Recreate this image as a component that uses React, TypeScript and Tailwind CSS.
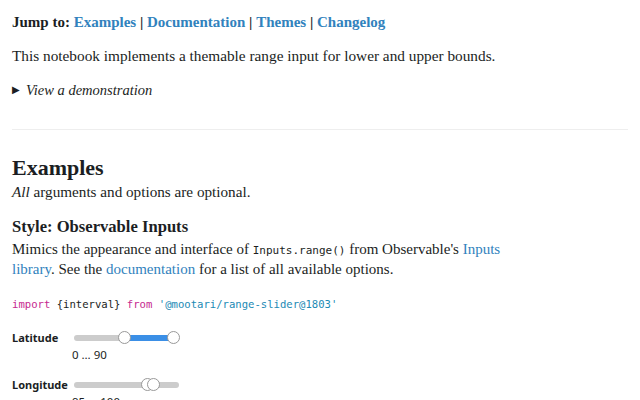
import React from "react";

const serif = { fontFamily: '"Liberation Serif", serif' };
const mono = { fontFamily: '"DejaVu Sans Mono", monospace' };

function Slider({ a, b }: { a: number; b: number }) {
  const w = 105;
  const pa = a * (w - 12) + 6;
  const pb = b * (w - 12) + 6;
  return (
    <div className="relative h-[14px] w-[105px]">
      <div className="absolute left-0 right-0 top-[4px] h-[6px] rounded-full bg-[#cccccc]" />
      <div className="absolute top-[4px] h-[6px] bg-[#3b8fe6]" style={{ left: pa, width: pb - pa }} />
      <div className="absolute top-0 h-[13px] w-[13px] rounded-full border border-[#999] bg-white" style={{ left: pa - 6.5 }} />
      <div className="absolute top-0 h-[13px] w-[13px] rounded-full border border-[#999] bg-white" style={{ left: pb - 6.5 }} />
    </div>
  );
}

export default function App() {
  return (
    <div className="w-[640px] h-[400px] overflow-hidden bg-white px-3 text-[#1b1e23]" style={serif}>
      <p className="pt-[12px] text-[15px] leading-[20px]">
        <b>Jump to:</b>{" "}
        <b className="text-[#3182bd]">Examples</b> <b>|</b> <b className="text-[#3182bd]">Documentation</b> <b>|</b>{" "}
        <b className="text-[#3182bd]">Themes</b> <b>|</b> <b className="text-[#3182bd]">Changelog</b>
      </p>
      <p className="mt-[14px] text-[15.3px] leading-[20px]">
        This notebook implements a themable range input for lower and upper bounds.
      </p>
      <div className="mt-[14px] flex items-center text-[14.5px] leading-[20px]">
        <span className="mr-[6px] text-[10px]">▶</span>
        <i>View a demonstration</i>
      </div>
      <div className="mt-[29px] h-px w-[616px] bg-[#eeeeee]" />
      <h2 className="mt-[24px] text-[22px] font-bold leading-[28px]">Examples</h2>
      <p className="text-[15.2px] leading-[20px]">
        <i>All</i> arguments and options are optional.
      </p>
      <h3 className="mt-[14px] text-[16.6px] font-bold leading-[22px]">Style: Observable Inputs</h3>
      <p className="mt-[1px] w-[500px] text-[15px] leading-[20px]">
        Mimics the appearance and interface of{" "}
        <code className="text-[11px] leading-[10px]" style={mono}>Inputs.range()</code> from
        Observable's <span className="text-[#3182bd]">Inputs library</span>. See the{" "}
        <span className="text-[#3182bd]">documentation</span> for a list of all available options.
      </p>
      <pre className="mt-[17px] text-[10.6px] leading-[16px]" style={mono}>
        <span className="text-[#c6288f]">import</span> {"{interval}"} <span className="text-[#c6288f]">from</span>{" "}
        <span className="text-[#1b8ab5]">'@mootari/range-slider@1803'</span>
      </pre>
      <div style={{ fontFamily: '"Noto Sans", sans-serif' }}>
        <div className="mt-[18px] flex items-center">
          <span className="w-[62px] text-[11px] font-bold leading-[16px]">Latitude</span>
          <Slider a={0.48} b={1} />
        </div>
        <div className="ml-[60px] mt-[1px] text-[11.5px] leading-[16px]">0 … 90</div>
        <div className="mt-[14px] flex items-center">
          <span className="w-[62px] text-[11px] font-bold leading-[16px]">Longitude</span>
          <Slider a={0.73} b={0.785} />
        </div>
        <div className="ml-[60px] mt-[1px] text-[11.5px] leading-[16px]">95 … 100</div>
      </div>
    </div>
  );
}
